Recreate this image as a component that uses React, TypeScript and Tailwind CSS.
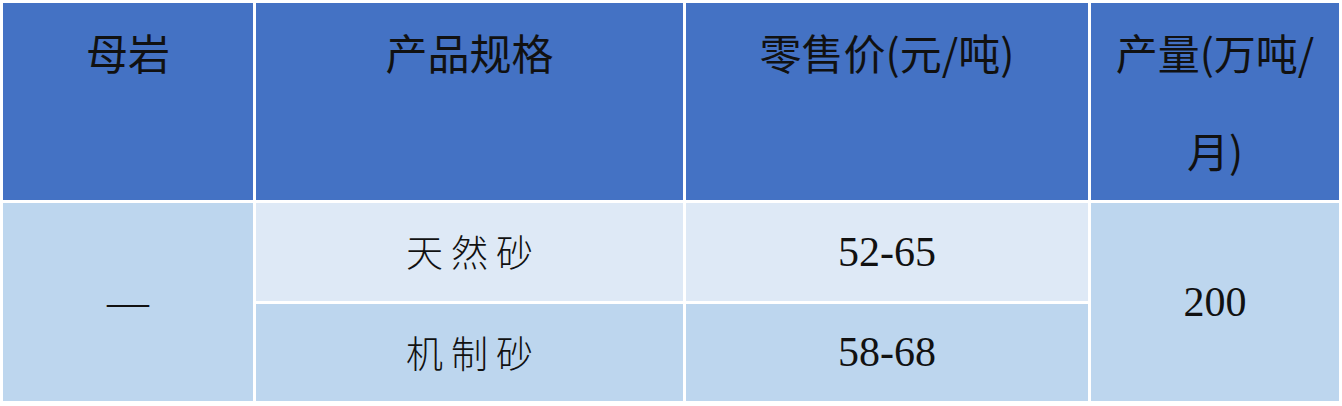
export default function App() {
  const cjk = 'font-["Noto_Sans_CJK_SC","Noto_Sans",sans-serif]'
  const serif = 'font-["Liberation_Serif","Noto_Sans_CJK_SC",serif]'
  const head = `bg-[#4472c4] text-center text-[42px] leading-[98px] ${cjk}`
  return (
    <div className="w-[1342px] h-[406px] bg-white p-[3px] pb-[5px]">
      <div className="grid grid-cols-[250px_427px_402px_1fr] grid-rows-[197px_98px_97px] gap-[3px] text-[#111]">
        {/* header */}
        <div className={head}>母岩</div>
        <div className={head}>产品规格</div>
        <div className={head}>零售价(元/吨)</div>
        <div className={head}>
          产量(万吨/
          <br />
          月)
        </div>

        {/* body */}
        <div className={`row-span-2 bg-[#bdd6ee] flex items-center justify-center text-[42px] ${serif}`}>—</div>
        <div className={`bg-[#dee9f6] flex items-center justify-center text-[37px] font-light tracking-[8px] pl-[8px] ${cjk}`}>天然砂</div>
        <div className={`bg-[#dee9f6] flex items-center justify-center text-[42px] ${serif}`}>52-65</div>
        <div className={`row-span-2 bg-[#bdd6ee] flex items-center justify-center text-[42px] ${serif}`}>200</div>
        <div className={`bg-[#bdd6ee] flex items-center justify-center text-[37px] font-light tracking-[8px] pl-[8px] ${cjk}`}>机制砂</div>
        <div className={`bg-[#bdd6ee] flex items-center justify-center text-[42px] ${serif}`}>58-68</div>
      </div>
    </div>
  )
}
